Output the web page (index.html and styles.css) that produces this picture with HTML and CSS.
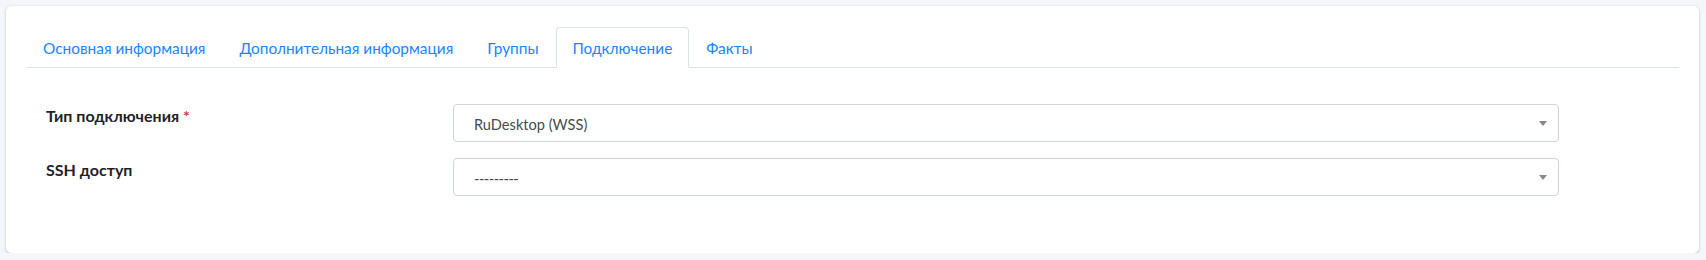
FILE: index.html
```html
<!DOCTYPE html>
<html lang="ru">
<head>
    <meta charset="UTF-8">
    <meta name="viewport" content="width=device-width, initial-scale=1.0">
    <title>Подключение</title>
    <link rel="stylesheet" href="styles.css">
</head>
<body>
    <div class="card">
        <ul class="nav-tabs">
            <li><a href="#" class="nav-link">Основная информация</a></li>
            <li><a href="#" class="nav-link">Дополнительная информация</a></li>
            <li><a href="#" class="nav-link">Группы</a></li>
            <li><a href="#" class="nav-link active">Подключение</a></li>
            <li><a href="#" class="nav-link">Факты</a></li>
        </ul>
        <div class="tab-content">
            <div class="form-row">
                <label class="form-label">Тип подключения <span class="required">*</span></label>
                <div class="select-box">
                    <span class="select-value">RuDesktop (WSS)</span>
                    <b class="select-arrow"></b>
                </div>
            </div>
            <div class="form-row">
                <label class="form-label">SSH доступ</label>
                <div class="select-box">
                    <span class="select-value empty">---------</span>
                    <b class="select-arrow"></b>
                </div>
            </div>
        </div>
    </div>
</body>
</html>
```

FILE: styles.css
```css
body {
    margin: 0;
    padding: 0;
    background-color: #f4f6f9;
    font-family: Lato, "Open Sans", sans-serif;
    font-size: 16px;
    color: #212529;
}

.card {
    width: 1693px;
    height: 247px;
    box-sizing: border-box;
    margin: 6px 0 0 6px;
    padding: 21px 20px 0;
    background-color: #ffffff;
    border-radius: 5px;
    box-shadow: 0 0 1px rgba(0, 0, 0, 0.125), 0 1px 3px rgba(0, 0, 0, 0.2);
}

.nav-tabs {
    display: flex;
    list-style: none;
    margin: 0;
    padding: 0;
    border-bottom: 1px solid #dee2e6;
}

.nav-link {
    display: block;
    height: 40px;
    box-sizing: border-box;
    padding: 0 16px;
    line-height: 41px;
    margin-bottom: -1px;
    border: 1px solid transparent;
    border-radius: 4px 4px 0 0;
    color: #1a85ff;
    font-size: 15.4px;
    text-decoration: none;
}

.nav-link.active {
    height: 41px;
    border-color: #dee2e6 #dee2e6 #ffffff;
    background-color: #ffffff;
}

.tab-content {
    padding: 36px 20px 0;
}

.form-row {
    display: grid;
    grid-template-columns: 407px 1106px;
    margin-bottom: 16px;
}

.form-label {
    font-weight: 700;
    padding-top: 2px;
    color: #1f2328;
}

.required {
    color: #dc3545;
}

.select-box {
    position: relative;
    height: 38px;
    box-sizing: border-box;
    border: 1px solid #ced4da;
    border-radius: 4px;
    padding: 2px 20px 0;
    line-height: 36px;
    font-size: 14.6px;
    color: #444b52;
}

.select-value.empty {
    letter-spacing: -0.5px;
}

.select-arrow {
    position: absolute;
    right: 11px;
    top: 16px;
    border-style: solid;
    border-width: 5px 4px 0;
    border-color: #888888 transparent transparent;
}
```
